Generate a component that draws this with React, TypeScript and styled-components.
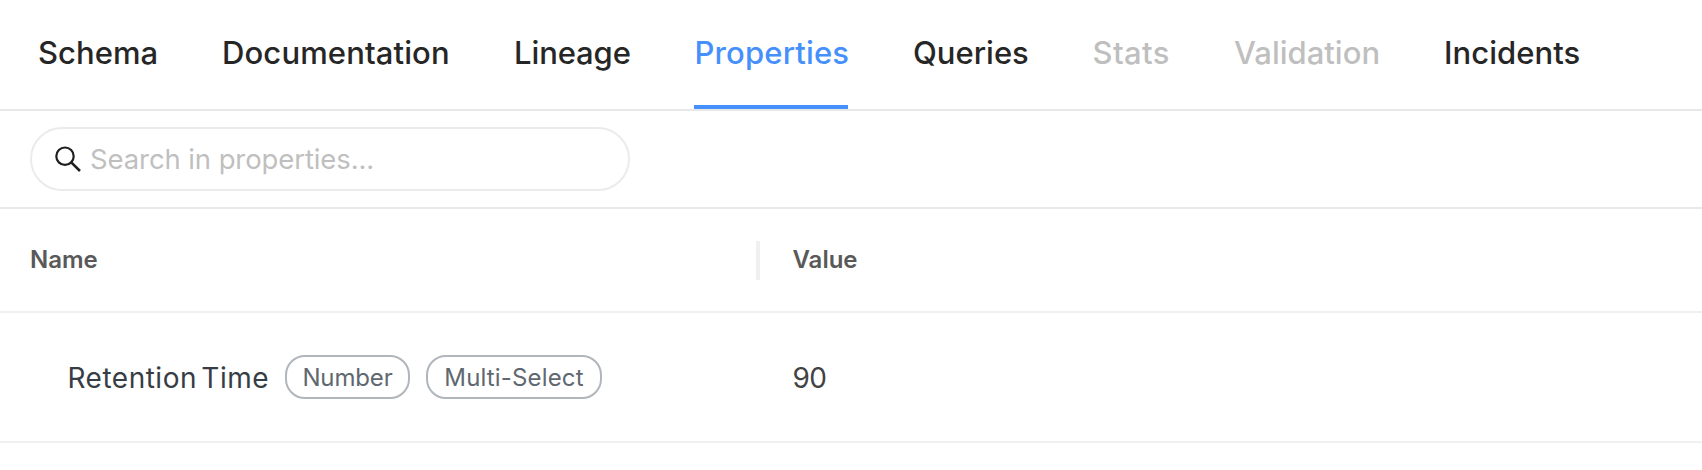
import React from 'react';
import styled, { createGlobalStyle } from 'styled-components';

const GlobalStyle = createGlobalStyle`
  * { box-sizing: border-box; }
  body {
    margin: 0;
    background: #fff;
    font-family: Inter, "Liberation Sans", sans-serif;
    -webkit-font-smoothing: antialiased;
  }
`;

const Page = styled.main`
  display: flex;
  flex-direction: column;
  height: 470px;
  overflow: hidden;
`;

const TabBar = styled.nav`
  display: flex;
  gap: 64px;
  height: 111px;
  padding-left: 38px;
  border-bottom: 2px solid #e8e8e8;
`;

type TabState = 'normal' | 'active' | 'disabled';
const tabColors: Record<TabState, string> = {
  normal: '#262626',
  active: '#4690fb',
  disabled: '#bfbfbf',
};

const Tab = styled.a<{ $state: TabState; $width: number; $tracking: number; $indent: number }>`
  flex: none;
  width: ${(p) => p.$width}px;
  height: 109px;
  padding-top: 33px;
  padding-left: ${(p) => p.$indent}px;
  font-size: 31px;
  line-height: 40px;
  font-weight: 500;
  letter-spacing: ${(p) => p.$tracking}px;
  white-space: nowrap;
  color: ${(p) => tabColors[p.$state]};
  border-bottom: 4px solid ${(p) => (p.$state === 'active' ? '#4690fb' : 'transparent')};
`;

const SearchBar = styled.div`
  display: flex;
  align-items: center;
  height: 98px;
  padding: 0 30px 2px;
  border-bottom: 2px solid #e8e8e8;
`;

const SearchField = styled.label`
  display: flex;
  align-items: center;
  width: 600px;
  height: 64px;
  margin-top: 2px;
  padding-left: 22px;
  border: 2px solid #ebebeb;
  border-radius: 32px;
`;

const SearchIcon = styled.svg`
  flex: none;
  width: 28px;
  height: 28px;
`;

const SearchInput = styled.input`
  flex: 1;
  min-width: 0;
  height: 40px;
  margin-left: 8px;
  padding: 0;
  border: 0;
  outline: 0;
  background: none;
  font: 400 27.5px/40px Inter, "Liberation Sans", sans-serif;
  letter-spacing: -0.1px;
  &::placeholder { color: #bfbfbf; opacity: 1; }
`;

const HeaderRow = styled.div`
  display: flex;
  align-items: center;
  height: 104px;
  border-bottom: 2px solid #f0f0f0;
`;

const HeaderCell = styled.div<{ $width?: number; $divided?: boolean }>`
  display: flex;
  align-items: center;
  width: ${(p) => (p.$width ? `${p.$width}px` : 'auto')};
  height: 39px;
  padding-left: ${(p) => (p.$divided ? 30 : 32.5)}px;
  padding-bottom: 2px;
  border-right: ${(p) => (p.$divided ? '4px solid #f0f0f0' : '0')};
  font-size: 24px;
  font-weight: 600;
  color: #595959;
`;

const Row = styled.div`
  display: flex;
  align-items: center;
  height: 130px;
  border-bottom: 2px solid #f0f0f0;
`;

const NameCell = styled.div`
  display: flex;
  align-items: center;
  width: 760px;
  padding-left: 67.5px;
`;

const PropertyName = styled.span`
  width: 217.5px;
  padding-top: 2px;
  font-size: 28px;
  line-height: 40px;
  letter-spacing: 0.5px;
  word-spacing: -4px;
  color: #373d44;
  white-space: nowrap;
`;

const Pill = styled.span<{ $width: number; $tracking: number }>`
  display: flex;
  align-items: center;
  justify-content: center;
  width: ${(p) => p.$width}px;
  height: 44px;
  margin-right: 16px;
  border: 2px solid #b0b6bc;
  border-radius: 20px;
  font-size: 24px;
  letter-spacing: ${(p) => p.$tracking}px;
  color: #5f6870;
  white-space: nowrap;
`;

const ValueCell = styled.div`
  padding: 2px 0 0 32.5px;
  font-size: 28px;
  line-height: 40px;
  letter-spacing: -0.5px;
  color: #434343;
`;

interface TabItem {
  label: string;
  width: number;
  tracking: number;
  indent: number;
  state?: TabState;
}

const tabs: TabItem[] = [
  { label: 'Schema', width: 120, tracking: 0.05, indent: 0 },
  { label: 'Documentation', width: 227, tracking: 0.13, indent: 0 },
  { label: 'Lineage', width: 117, tracking: -0.1, indent: 1 },
  { label: 'Properties', width: 154, tracking: 0.15, indent: 0.5, state: 'active' },
  { label: 'Queries', width: 116, tracking: 0, indent: 1 },
  { label: 'Stats', width: 77, tracking: 0.4, indent: 0.5, state: 'disabled' },
  { label: 'Validation', width: 146, tracking: 0, indent: 1, state: 'disabled' },
  { label: 'Incidents', width: 138, tracking: 0.05, indent: 1 },
];

export default function App() {
  return (
    <Page>
      <GlobalStyle />
      <TabBar>
        {tabs.map((t) => (
          <Tab
            key={t.label}
            $state={t.state ?? 'normal'}
            $width={t.width}
            $tracking={t.tracking}
            $indent={t.indent}
          >
            {t.label}
          </Tab>
        ))}
      </TabBar>
      <SearchBar>
        <SearchField>
          <SearchIcon viewBox="0 0 28 28" fill="none" stroke="#1f1f1f" strokeWidth="2.2">
            <circle cx="11" cy="11.2" r="8.7" />
            <path d="M17.2 17.4 L26 26" strokeWidth="2.6" />
          </SearchIcon>
          <SearchInput placeholder="Search in properties..." />
        </SearchField>
      </SearchBar>
      <HeaderRow>
        <HeaderCell $width={760} $divided>Name</HeaderCell>
        <HeaderCell>Value</HeaderCell>
      </HeaderRow>
      <Row>
        <NameCell>
          <PropertyName>Retention Time</PropertyName>
          <Pill $width={125} $tracking={-0.15}>Number</Pill>
          <Pill $width={176} $tracking={0.15}>Multi-Select</Pill>
        </NameCell>
        <ValueCell>90</ValueCell>
      </Row>
    </Page>
  );
}
